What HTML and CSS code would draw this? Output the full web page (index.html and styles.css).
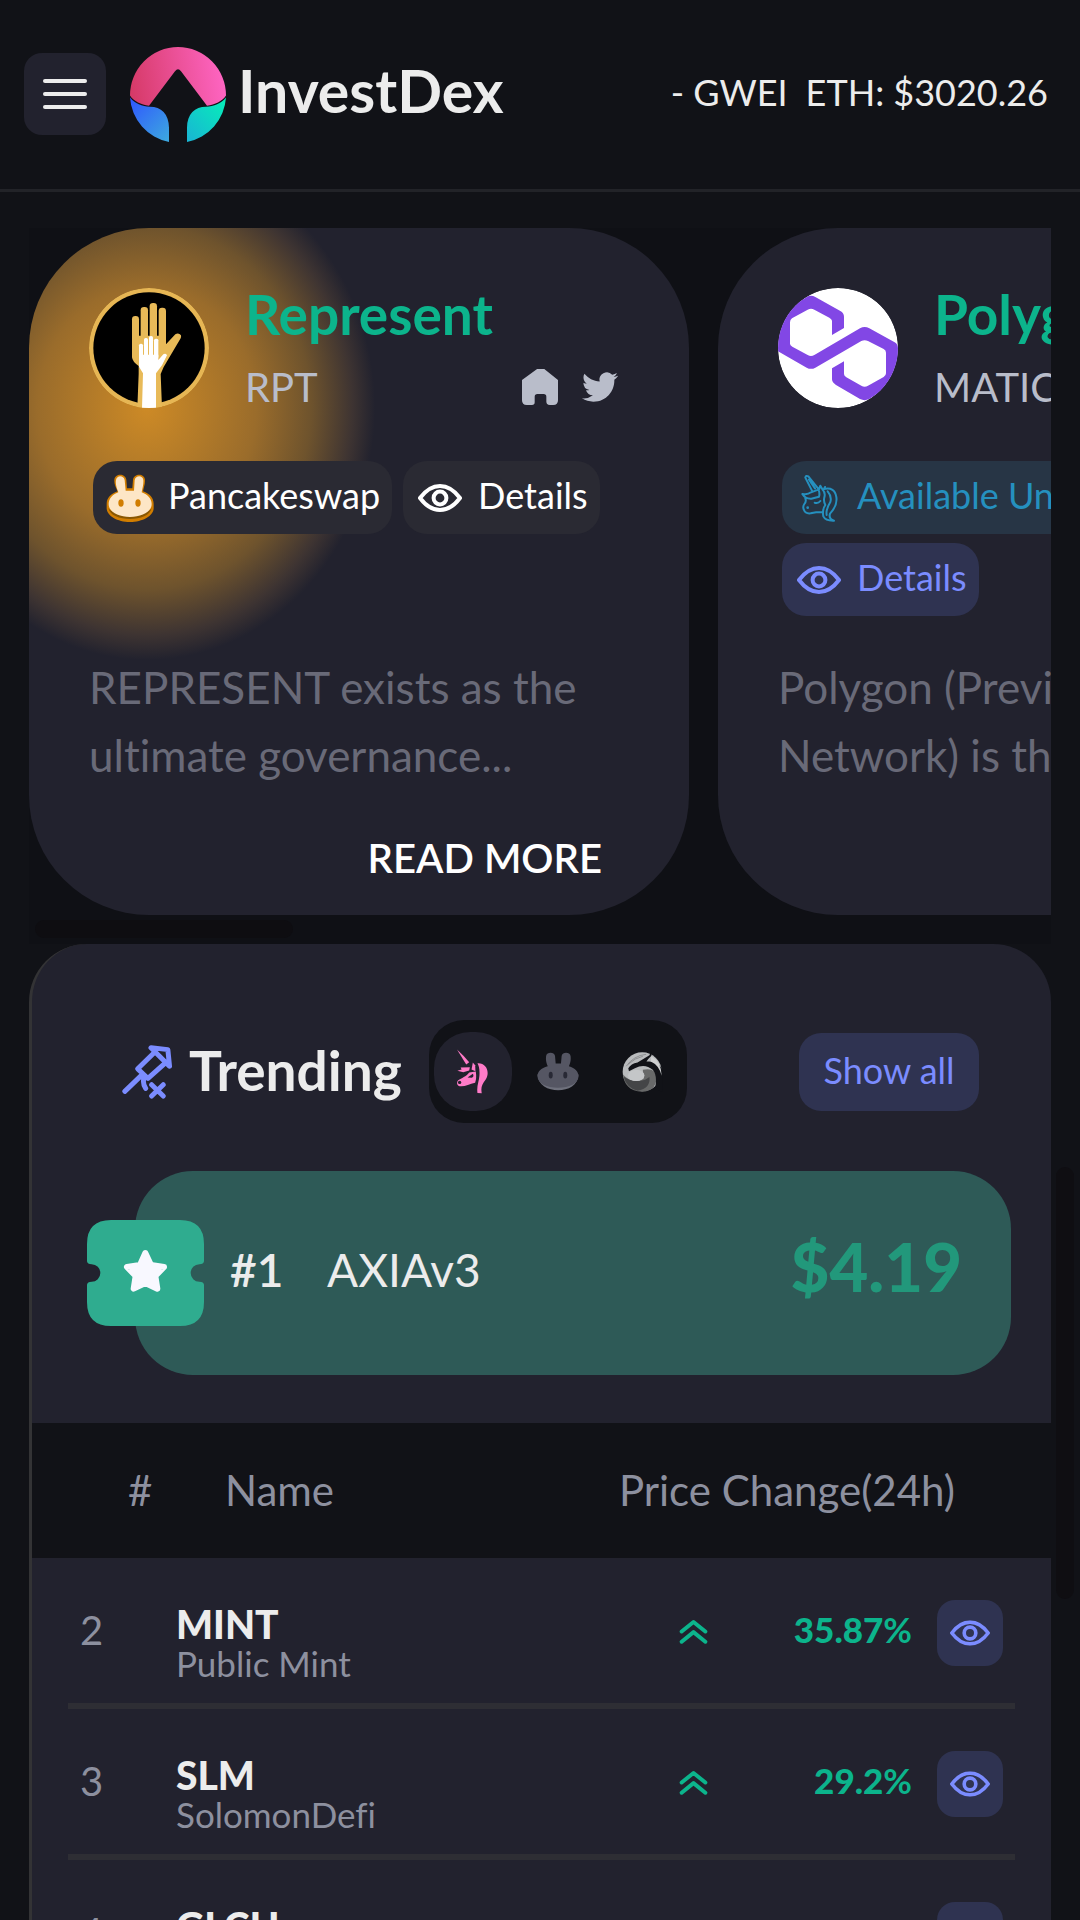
FILE: index.html
```html
<!DOCTYPE html>
<html lang="en">
<head>
<meta charset="utf-8">
<meta name="viewport" content="width=device-width, initial-scale=1">
<title>InvestDex</title>
<link rel="stylesheet" href="styles.css">
</head>
<body>
<svg class="defs" aria-hidden="true">
  <symbol id="eye" viewBox="0 0 44 28"><path d="M2 14C8 6 14 2 22 2s14 4 20 12c-6 8-12 12-20 12S8 22 2 14z" fill="none" stroke="currentColor" stroke-width="4" stroke-linejoin="round"/><circle cx="22" cy="14" r="6.400" fill="none" stroke="currentColor" stroke-width="4"/></symbol>
  <symbol id="up" viewBox="238 145 88 76"><path d="M246 183l36-29 36 29M246 214l36-29 36 29" fill="none" stroke="currentColor" stroke-width="12" stroke-linecap="round" stroke-linejoin="round"/></symbol>
</svg>

<header class="topbar">
  <button class="menu" type="button" aria-label="Open menu"><span class="menu-line"></span><span class="menu-line"></span><span class="menu-line"></span></button>
  <a class="brand" href="#">
    <svg class="brand-logo" viewBox="0 0 96 96" preserveAspectRatio="none" aria-hidden="true">
      <defs>
        <linearGradient id="pink" x1="0" y1="0.600" x2="1" y2="0.500"><stop offset="0" stop-color="#d63a68"/><stop offset="1" stop-color="#ff66c4"/></linearGradient>
        <linearGradient id="blue" x1="0" y1="0" x2="0.900" y2="1"><stop offset="0" stop-color="#2f55ff"/><stop offset="1" stop-color="#3ca6e0"/></linearGradient>
        <linearGradient id="teal" x1="1" y1="0" x2="0" y2="1"><stop offset="0" stop-color="#06f0b8"/><stop offset="1" stop-color="#19b4d4"/></linearGradient>
      </defs>
      <path fill="url(#pink)" d="M0 50A48 48 0 0 1 96 50C92 56 85 59 77 60L51 26Q48 22 45 26L19 60C11 59 4 56 0 50Z"/>
      <path fill="url(#blue)" d="M0 52C5 58 12 61 20 61C31 61 39 68 39 82V96A48 48 0 0 1 0 52Z"/>
      <path fill="url(#teal)" d="M96 52C91 58 84 61 76 61C65 61 57 68 57 82V96A48 48 0 0 0 96 52Z"/>
    </svg>
    <span class="brand-name">InvestDex</span>
  </a>
  <div class="ticker"><span>- GWEI</span><span>ETH: $3020.26</span></div>
</header>

<main class="page">
  <section class="carousel" aria-label="Projects">
    <article class="card card-glow">
      <div class="card-head">
        <svg class="avatar" viewBox="207 204 360 360" role="img" aria-label="Represent">
          <defs><clipPath id="round"><circle cx="387" cy="384" r="180"/></clipPath></defs>
          <g clip-path="url(#round)">
            <circle cx="387" cy="384" r="180" fill="#e6b654"/><circle cx="387" cy="384" r="167"/>
            <g fill="#e8ba58"><rect x="336" y="288" width="21" height="90" rx="10"/><rect x="362" y="261" width="22" height="110" rx="10"/><rect x="389" y="249" width="22" height="110" rx="10"/><rect x="416" y="263" width="22" height="110" rx="10"/><path d="M336 347H438V373L466 343Q476 337 483 346Q484 350 482 355L431 441L422 462L426 564H352L356 462V438Q337 425 336 412Z"/></g>
            <g fill="#fff"><rect x="357" y="371" width="12" height="50" rx="5"/><rect x="372" y="354" width="12" height="60" rx="5"/><rect x="387" y="348" width="12" height="60" rx="5"/><rect x="402" y="356" width="13" height="60" rx="5"/><path d="M357 404H415V420L430 403Q437 399 441 406L426 436L408 460V564H366L369 460L357 440Z"/></g>
          </g>
        </svg>
        <div class="card-info">
          <h2 class="card-title">Represent</h2>
          <div class="card-sub"><span>RPT</span>
            <span class="socials">
              <a href="#" aria-label="Website"><svg class="social" viewBox="456 330 105 105"><path fill="currentColor" d="M456 362L500 330H521L561 362V421Q561 435 547 435H537Q527 435 527 425V411Q527 403 519 403H501Q493 403 493 411V427Q493 435 485 435H470Q456 435 456 421Z"/></svg></a>
              <a href="#" aria-label="Twitter"><svg class="social" viewBox="0 0 24 24"><path fill="currentColor" d="M23.953 4.570a10 10 0 01-2.825.775 4.958 4.958 0 002.163-2.723c-.951.555-2.005.959-3.127 1.184a4.920 4.920 0 00-8.384 4.482C7.690 8.095 4.067 6.130 1.640 3.162a4.822 4.822 0 00-.666 2.475c0 1.710.870 3.213 2.188 4.096a4.904 4.904 0 01-2.228-.616v.060a4.923 4.923 0 003.946 4.827 4.996 4.996 0 01-2.212.085 4.936 4.936 0 004.604 3.417 9.867 9.867 0 01-6.102 2.105c-.390 0-.779-.023-1.170-.067a13.995 13.995 0 007.557 2.209c9.053 0 13.998-7.496 13.998-13.985 0-.210 0-.420-.015-.630A9.935 9.935 0 0024 4.590z"/></svg></a>
            </span>
          </div>
        </div>
      </div>
      <div class="tags">
        <a class="tag" href="#"><svg class="tag-icon" viewBox="256 760 144 144" aria-hidden="true"><path fill="#d17d00" d="M291 812C285 800 280 790 281 777C283 757 314 757 317 777L319 803H335L337 777C340 757 371 757 373 777C374 790 369 800 367 812C388 820 399 832 399 850V862C399 886 365 904 328 904S258 886 258 862V850C258 832 270 820 291 812Z"/><path fill="#8a5700" d="M263 862C270 906 386 906 393 862C380 888 276 888 263 862Z"/><path fill="#fde6c6" d="M293 815C287 800 284 788 286 778C289 763 309 764 312 778L315 810H340L342 778C345 764 366 763 368 778C369 789 366 800 363 815C381 822 393 834 393 850C393 873 363 889 328 889S264 873 264 850C264 834 275 822 293 815Z"/><ellipse cx="301" cy="847" rx="8" ry="11" fill="#d17d00"/><ellipse cx="352" cy="847" rx="8" ry="11" fill="#d17d00"/></svg><span>Pancakeswap</span></a>
        <a class="tag" href="#"><svg class="tag-icon" viewBox="-2 -10 48 48" aria-hidden="true"><use href="#eye" width="44" height="28"/></svg><span>Details</span></a>
      </div>
      <p class="card-text">REPRESENT exists as the<br>ultimate governance...</p>
      <a class="read-more" href="#">READ MORE</a>
    </article>

    <article class="card">
      <div class="card-head">
        <svg class="avatar" viewBox="204 204 360 360" role="img" aria-label="Polygon">
          <defs><clipPath id="round2"><circle cx="384" cy="384" r="180"/></clipPath></defs>
          <g clip-path="url(#round2)"><circle cx="384" cy="384" r="180" fill="#fff"/><path fill="#8247e5" d="M366 345V302Q365 297 358 293L313 269Q303 263 293 269L246 295Q240 299 240 307V371Q240 376 247 380L293 405Q303 411 313 405L450 325Q464 317 478 325L554 367Q564 373 564 384V480L478 537Q464 544 450 537L378 495Q366 487 366 478V445L402 424V462Q402 468 409 472L454 497Q464 503 474 497L521 471Q528 467 528 460V398Q528 391 521 387L474 363Q464 358 454 363L316 443Q303 450 290 443L204 394V285L290 231Q303 224 316 231L391 273Q402 279 402 290V324Z"/></g>
        </svg>
        <div class="card-info">
          <h2 class="card-title">Polygon</h2>
          <div class="card-sub"><span>MATIC</span></div>
        </div>
      </div>
      <div class="tags">
        <a class="tag tag-uni" href="#"><svg class="tag-icon" viewBox="254 760 144 144" aria-hidden="true"><g fill="none" stroke="currentColor" stroke-width="6" stroke-linecap="round" stroke-linejoin="round"><path d="M306 812L285 771Q286 763 294 767L323 803M296 777L314 803M277 820Q292 823 302 815L326 806L330 795L337 807M276 820Q285 835 303 834L326 828Q329 819 325 808M285 834Q289 841 282 850Q276 859 281 868Q285 880 301 878Q316 874 337 874M337 807Q346 817 342 830Q339 842 345 853Q335 867 339 887Q346 901 371 900Q354 894 359 879Q382 854 378 829Q373 798 341 805L344 799M352 812Q365 827 360 844Q346 867 349 883M313 846Q324 849 330 841"/></g><circle cx="292" cy="861" r="4" fill="currentColor"/></svg><span>Available Uniswap</span></a>
        <a class="tag tag-info" href="#"><svg class="tag-icon" viewBox="-2 -10 48 48" aria-hidden="true"><use href="#eye" width="44" height="28"/></svg><span>Details</span></a>
      </div>
      <p class="card-text">Polygon (Previously Matic<br>Network) is the...</p>
    </article>
    <span class="thumb-x"></span>
  </section>

  <section class="panel">
    <div class="panel-head">
      <svg class="rocket" viewBox="302 336 156 166" aria-hidden="true"><path fill="none" stroke="#7b8cff" stroke-width="15" stroke-linecap="round" stroke-linejoin="round" d="M392 347L443 353L448 403ZM400 364L352 411L383 440L433 395M313 479L364 430M370 442Q367 456 376 470M394 459L429 493M429 459L394 493"/></svg>
      <h1 class="panel-title">Trending</h1>
      <div class="switch" role="group" aria-label="Exchange">
        <button class="switch-item is-on" type="button" aria-label="Uniswap" aria-pressed="true"><svg class="ic-uni" viewBox="136 178 100 136"><g fill="#ff7bc8"><path d="M139 179Q158 196 176 218L167 225Z"/><path d="M201 221C228 219 240 248 226 270C214 286 211 294 214 312L201 311C198 290 206 276 207 258C208 240 206 230 201 221Z"/><path d="M187 219L194 227L195 245L183 240Z"/><path d="M150 234L178 233L176 243L158 248L140 244L153 240Z"/><path d="M176 249L196 246Q199 267 194 280C178 284 165 291 152 291C140 291 136 281 142 273C154 265 166 262 176 249Z"/></g><path fill="#22222e" d="M171 264Q178 259 187 253Q192 262 184 265Z"/><circle cx="147" cy="279" r="5" fill="#22222e"/></svg></button>
        <button class="switch-item" type="button" aria-label="Pancakeswap" aria-pressed="false"><svg class="ic-bunny" viewBox="384 188 126 118"><path fill="#6e707c" d="M385 256C388 320 507 320 509 256Z"/><path fill="#555663" d="M416 231C410 218 410 208 411 200C413 187 436 187 438 200L440 223H456L458 200C460 187 483 187 485 200C486 208 486 218 480 231C499 237 509 247 509 261C509 283 481 296 447 296S385 283 385 261C385 247 395 237 416 231Z"/><ellipse cx="425" cy="258" rx="6" ry="10" fill="#282935"/><ellipse cx="469" cy="258" rx="6" ry="10" fill="#282935"/></svg></button>
        <button class="switch-item" type="button" aria-label="Quickswap" aria-pressed="false"><svg class="ic-quick" viewBox="638 186 122 124"><circle cx="698" cy="249" r="59" fill="#b9bbbd"/><path fill="#686969" d="M700 243Q742 235 741 270Q738 309 698 309C660 309 642 285 640 257Q670 290 702 270Z"/><path fill="#444547" d="M642 264Q672 284 707 273L720 265Q724 300 684 306Q651 298 642 264Z"/><path fill="#111217" d="M656 238Q664 225 684 221L720 199L725 187L726 200Q714 211 711 218Q742 214 758 240L760 310Q750 310 738 292Q744 260 730 243Q706 222 676 238L658 247Z"/><path fill="#cfd0d1" d="M724 218L726 202Q756 219 757 261Q749 229 724 218Z"/><ellipse cx="680" cy="260" rx="25" ry="17" fill="#c4c6c8"/><path d="M650 232Q672 200 710 196M656 226Q676 207 700 202" fill="none" stroke="#77787b" stroke-width="2"/></svg></button>
      </div>
      <button class="show-all" type="button">Show all</button>
    </div>

    <div class="leader">
      <svg class="ticket" viewBox="201 177 351 318" aria-hidden="true"><path fill="#2fac8f" d="M273 177H480Q552 177 552 249V301Q551 310 538 310A26 26 0 0 0 538 362Q551 362 552 371V423Q552 495 480 495H273Q201 495 201 423V371Q202 362 215 362A26 26 0 0 0 215 310Q202 310 201 301V249Q201 177 273 177Z"/><path fill="#f8f8ff" stroke="#f8f8ff" stroke-width="18" stroke-linejoin="round" d="M376 276L393 312L432 318L406 345L412 383L376 366L341 383L347 345L321 318L360 312Z"/></svg>
      <span class="leader-rank">#1</span>
      <span class="leader-name">AXIAv3</span>
      <span class="leader-price">$4.19</span>
    </div>

    <table class="coins">
      <thead><tr><th>#</th><th>Name</th><th>Price Change(24h)</th></tr></thead>
      <tbody>
        <tr><td class="rank">2</td><td class="coin"><strong>MINT</strong><span>Public Mint</span></td><td class="trend"><svg viewBox="0 0 29 25" aria-label="up"><use href="#up" width="29" height="25"/></svg></td><td class="change">35.87<span>%</span></td><td class="act"><button class="view" type="button" aria-label="View MINT"><svg viewBox="0 0 44 28"><use href="#eye"/></svg></button></td></tr>
        <tr><td class="rank">3</td><td class="coin"><strong>SLM</strong><span>SolomonDefi</span></td><td class="trend"><svg viewBox="0 0 29 25" aria-label="up"><use href="#up" width="29" height="25"/></svg></td><td class="change">29.2<span>%</span></td><td class="act"><button class="view" type="button" aria-label="View SLM"><svg viewBox="0 0 44 28"><use href="#eye"/></svg></button></td></tr>
        <tr><td class="rank">4</td><td class="coin"><strong>GLCH</strong></td><td class="trend"></td><td class="change"></td><td class="act"><button class="view" type="button" aria-label="View GLCH"><svg viewBox="0 0 44 28"><use href="#eye"/></svg></button></td></tr>
      </tbody>
    </table>
  </section>
  <span class="thumb-y"></span>
</main>
</body>
</html>
```
FILE: styles.css
```css
* { box-sizing: border-box; }

body {
  margin: 0;
  height: 100vh;
  display: flex;
  flex-direction: column;
  overflow: hidden;
  background: #111217;
  color: #ececec;
  font-family: Lato, "Noto Sans", sans-serif;
  font-variant-ligatures: none;
}

button { border: 0; padding: 0; font: inherit; color: inherit; cursor: pointer; }
a { color: inherit; text-decoration: none; }
svg { display: block; flex: none; }
h1, h2, p { margin: 0; }
.defs { position: absolute; width: 0; height: 0; }

/* Top bar */
.topbar {
  flex: none;
  display: flex;
  align-items: center;
  height: 192px;
  padding: 0 32px 2px 24px;
  border-bottom: 3px solid #222328;
}
.menu {
  display: flex;
  flex-direction: column;
  align-items: center;
  justify-content: center;
  gap: 9px;
  width: 82px;
  height: 82px;
  border-radius: 18px;
  background: #22222e;
}
.menu-line { width: 44px; height: 4px; border-radius: 2px; background: #ececec; }
.brand { display: flex; align-items: center; gap: 12px; margin-left: 24px; }
.brand-logo { width: 96px; height: 97px; }
.brand-name { font-size: 59px; font-weight: 700; line-height: 64px; padding-bottom: 6px; }
.ticker { display: flex; gap: 18px; margin-left: auto; padding-bottom: 4px; font-size: 36px; line-height: 44px; white-space: nowrap; }

/* Scrolling page */
.page { position: relative; flex: 1; min-height: 0; padding: 36px 29px 0; overflow: hidden; }
.thumb-y { position: absolute; top: 975px; right: 6px; width: 18px; height: 432px; border-radius: 9px; background: #0f0e12; }

/* Project cards */
.carousel { position: relative; display: flex; gap: 29px; padding-bottom: 29px; overflow: hidden; background: #0f1015; }
.thumb-x { position: absolute; left: 6px; bottom: 6px; width: 258px; height: 18px; border-radius: 9px; background: #0e0d11; }
.card { flex: none; display: flex; flex-direction: column; width: 660px; min-height: 687px; padding: 60px 60px 33px; border-radius: 120px; background: #22222e; }
.card-glow { background: radial-gradient(ellipse 228px 252px at 118px 180px, #cd8a26 0%, #9a6c2b 48%, #6e532d 72%, #3e3432 90%, #22222e 100%) #22222e; }
.card-head { display: flex; gap: 36px; }
.avatar { width: 120px; height: 120px; }
.card-info { flex: 1; display: flex; flex-direction: column; gap: 23px; }
.card-title { color: #0cb48c; font-size: 55px; font-weight: 700; line-height: 52px; }
.card-sub { display: flex; align-items: center; justify-content: space-between; color: #b9bdca; font-size: 40px; line-height: 48px; }
.socials { display: flex; gap: 24px; padding-right: 11px; }
.social { width: 36px; height: 36px; }
.tags { display: flex; flex-wrap: wrap; align-content: flex-start; gap: 9px 11px; min-height: 156px; margin: 50px 4px 0; }
.tag { display: flex; align-items: center; gap: 14px; height: 73px; padding: 0 12px 0 13px; border-radius: 24px; background: #2a2a33; color: #fff; font-size: 36px; white-space: nowrap; }
.tag span { padding-bottom: 5px; }
.tag-uni { background: #273545; color: #2590bf; }
.tag-info { background: #2f3351; color: #7b8cff; }
.tag-icon { width: 48px; height: 48px; }
.card-text { margin-top: 36px; color: #696a78; font-size: 44px; line-height: 68px; white-space: nowrap; }
.read-more { align-self: flex-end; margin-top: 45px; padding-right: 27px; color: #fff; font-size: 40px; font-weight: 600; line-height: 48px; }

/* Trending panel */
.panel { border-left: 3px solid #333335; border-radius: 58px 58px 0 0; padding-top: 76px; background: #22222e; }
.panel-head { display: flex; align-items: center; padding: 0 72px 0 89px; }
.rocket { width: 52px; height: 55px; }
.panel-title { margin: 0 27px 0 16px; padding-bottom: 4px; font-size: 55px; font-weight: 700; line-height: 60px; }
.switch { display: flex; gap: 7px; padding: 12px 5px; border-radius: 35px; background: #111217; }
.switch-item { display: flex; align-items: center; justify-content: center; width: 78px; height: 79px; border-radius: 36px; background: none; }
.is-on { background: #22222e; }
.ic-uni { width: 33px; height: 45px; }
.ic-bunny { width: 42px; height: 39px; }
.ic-quick { width: 41px; height: 41px; }
.show-all { margin-left: auto; width: 180px; height: 78px; padding-bottom: 4px; border-radius: 22px; background: #2f3351; color: #7b8cff; font-size: 36px; }

.leader { display: flex; align-items: center; height: 204px; margin: 48px 40px 48px 103px; padding-right: 49px; border-radius: 58px; background: #2e5a57; }
.ticket { width: 117px; height: 106px; margin-left: -48px; }
.leader-rank, .leader-name { padding-bottom: 7px; font-size: 46px; }
.leader-rank { margin-left: 26px; width: 97px; font-weight: 600; }
.leader-price { margin-left: auto; padding-bottom: 14px; color: #22987b; font-size: 67px; font-weight: 900; }

/* Coin table */
.coins, .coins thead, .coins tbody { display: block; }
.coins th, .coins td { padding: 0; text-align: left; }
.coins thead { background: #111217; }
.coins thead tr { display: grid; grid-template-columns: 97px 1fr auto; align-items: center; height: 135px; padding: 0 96px 2px; }
.coins th { color: #8d909f; font-size: 42px; font-weight: 400; }
.coins tbody { padding: 0 36px; }
.coins tbody tr { display: grid; grid-template-columns: 108px 1fr 112px 121px 91px; height: 151px; padding-right: 12px; border-bottom: 6px solid #2e2e34; }
.coins .rank { padding-left: 12px; color: #8d909f; font-size: 40px; line-height: 144px; }
.coins .coin { display: flex; flex-direction: column; padding-top: 45px; }
.coin strong { font-size: 39px; font-weight: 900; line-height: 42px; }
.coin span { color: #8d909f; font-size: 35px; line-height: 36px; }
.trend svg { width: 29px; height: 25px; margin-top: 61px; color: #0cb48c; }
.coins .change { color: #0cb48c; font-size: 35px; font-weight: 900; line-height: 142px; text-align: right; white-space: nowrap; }
.change span { font-weight: 700; }
.act { display: flex; justify-content: flex-end; align-items: flex-start; }
.view { display: flex; align-items: center; justify-content: center; width: 66px; height: 66px; margin-top: 42px; border-radius: 18px; background: #2f3351; color: #7b8cff; }
.view svg { width: 40px; height: 26px; }
```
